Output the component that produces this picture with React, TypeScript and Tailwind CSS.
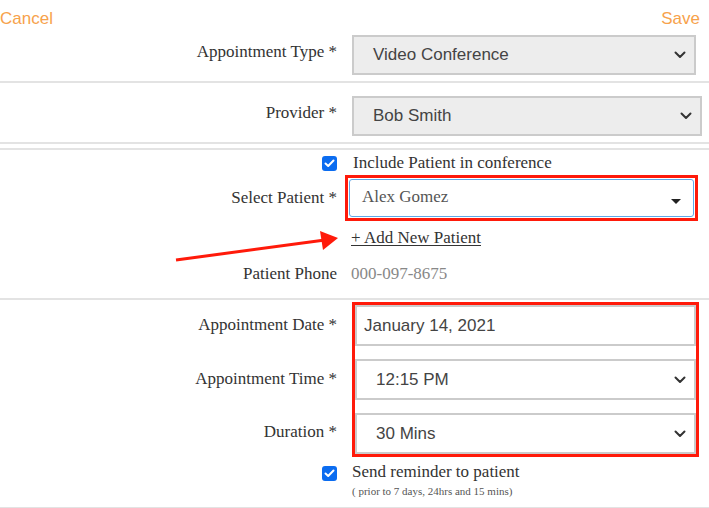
import React from "react";

const serif = { fontFamily: '"Liberation Serif", "Times New Roman", serif' };
const sans = { fontFamily: '"Liberation Sans", Arial, sans-serif' };

function Chevron() {
  return (
    <svg width="12" height="8" viewBox="0 0 12 8" className="shrink-0">
      <path d="M1.5 1.5 L6 6 L10.5 1.5" fill="none" stroke="#333" strokeWidth="2" strokeLinecap="round" strokeLinejoin="round" />
    </svg>
  );
}

function Check() {
  return (
    <div className="w-[15px] h-[15px] rounded-[3px] bg-[#0b6cf0] flex items-center justify-center shrink-0">
      <svg width="11" height="9" viewBox="0 0 11 9">
        <path d="M1.5 4.5 L4.2 7 L9.5 1.5" fill="none" stroke="white" strokeWidth="2" strokeLinecap="round" strokeLinejoin="round" />
      </svg>
    </div>
  );
}

function Label({ children }: { children: React.ReactNode }) {
  return (
    <div className="w-[337px] shrink-0 text-right text-[17px] text-[#333]" style={serif}>
      {children}
    </div>
  );
}

function FakeSelect({ value, grey, className }: { value: string; grey?: boolean; className?: string }) {
  return (
    <div
      className={`h-[40px] flex items-center justify-between pl-[19px] pr-[8px] border-2 border-[#cbcbcb] text-[17px] text-[#444] ${grey ? "bg-[#ededed]" : "bg-white"} ${className ?? ""}`}
      style={sans}
    >
      <span>{value}</span>
      <Chevron />
    </div>
  );
}

export default function App() {
  return (
    <div className="relative w-[709px] h-[508px] bg-white overflow-hidden">
      <div className="h-[30px] flex justify-between items-start pt-[6px] text-[17px] text-[#f7a24b]" style={sans}>
        <span>Cancel</span>
        <span className="pr-[9px]">Save</span>
      </div>

      <div className="h-[53px] flex items-start pt-[5px] border-b-2 border-[#e3e3e3]">
        <Label><div className="pt-[4px]">Appointment Type *</div></Label>
        <FakeSelect value="Video Conference" grey className="ml-[15px] w-[344px]" />
      </div>

      <div className="h-[61px] flex items-start pt-[13px] border-b-2 border-[#e3e3e3]">
        <Label><div className="pt-[4px]">Provider *</div></Label>
        <FakeSelect value="Bob Smith" grey className="ml-[15px] w-[350px]" />
      </div>

      <div className="h-[4px]" />

      <div className="h-[152px] border-t-2 border-b-2 border-[#e3e3e3] flex flex-col">
        <div className="h-[25px] flex items-center pt-[1px] shrink-0">
          <div className="w-[337px] flex justify-end">
            <Check />
          </div>
          <span className="ml-[16px] text-[17px] text-[#333]" style={serif}>Include Patient in conference</span>
        </div>
        <div className="h-[46px] flex items-center shrink-0">
          <Label>Select Patient *</Label>
          <div className="ml-[8px] w-[353px] h-[46px] border-[3px] border-[#ff1a0a] p-[1px]">
            <div className="h-full flex items-center justify-between border border-[#5fa8e8] rounded-[3px] pl-[12px] pr-[12px] pb-[2px] bg-white">
              <span className="text-[17px] text-[#555]" style={serif}>Alex Gomez</span>
              <svg width="10" height="6" viewBox="0 0 10 6" className="mt-[10px]">
                <path d="M0 0 L10 0 L5 5 Z" fill="#222" />
              </svg>
            </div>
          </div>
        </div>
        <div className="h-[30px] flex items-center pt-[3px] shrink-0">
          <div className="w-[351px]" />
          <span className="text-[17px] text-[#333] underline underline-offset-2" style={serif}>+ Add New Patient</span>
        </div>
        <div className="h-[36px] flex items-center pt-[9px] shrink-0">
          <Label>Patient Phone</Label>
          <span className="ml-[14px] text-[17px] text-[#888]" style={serif}>000-097-8675</span>
        </div>
      </div>

      <div className="flex flex-col pt-[2px]">
        <div className="flex">
          <div className="w-[337px] shrink-0 flex flex-col text-right text-[17px] text-[#333]" style={serif}>
            <div className="h-[53px] pt-[10px]">Appointment Date *</div>
            <div className="h-[53px] pt-[11px]">Appointment Time *</div>
            <div className="h-[48px] pt-[11px]">Duration *</div>
          </div>
          <div className="ml-[15px] w-[347px] border-[3px] border-[#ff1a0a] flex flex-col gap-[13px]">
            <div className="h-[41px] flex items-center pl-[7px] pt-[1px] border-2 border-[#cbcbcb] text-[17px] text-[#444] bg-white" style={sans}>
              January 14, 2021
            </div>
            <FakeSelect value="12:15 PM" className="h-[41px]" />
            <FakeSelect value="30 Mins" className="h-[41px]" />
          </div>
        </div>
        <div className="flex items-start mt-[3px] h-[47px]">
          <div className="w-[337px] flex justify-end pt-[6px]">
            <Check />
          </div>
          <div className="ml-[15px] flex flex-col" style={serif}>
            <span className="text-[17px] text-[#333] leading-[24px]">Send reminder to patient</span>
            <span className="text-[11px] text-[#555] leading-[14px]">( prior to 7 days, 24hrs and 15 mins)</span>
          </div>
        </div>
        <div className="border-b-2 border-[#e3e3e3]" />
      </div>

      <svg className="absolute left-0 top-0 pointer-events-none" width="709" height="508">
        <line x1="176" y1="260" x2="325" y2="240" stroke="#ff1a0a" strokeWidth="3" />
        <path d="M338 238 L320 231 L323 250 Z" fill="#ff1a0a" />
      </svg>
    </div>
  );
}
